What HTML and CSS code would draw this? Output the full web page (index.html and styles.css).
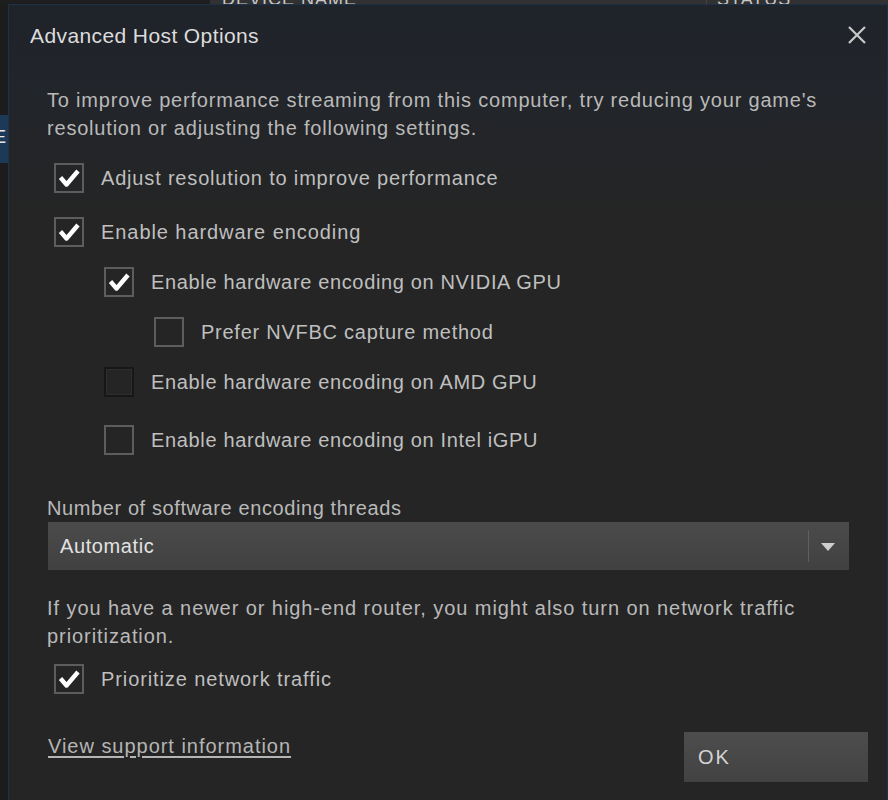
FILE: index.html
```html
<!DOCTYPE html>
<html>
<head>
<meta charset="utf-8">
<link rel="stylesheet" href="styles.css">
</head>
<body>
<div class="app">
  <div class="app-header">
    <div class="app-side-top"></div>
    <div class="col col-name">DEVICE NAME</div>
    <div class="col col-status">STATUS</div>
  </div>
  <div class="app-body">
    <div class="app-side">
      <div class="side-row"></div>
      <div class="side-row selected"><span class="side-glyph">E</span></div>
    </div>
  </div>
</div>

<div class="dialog">
  <div class="dialog-header">
    <div class="dialog-title">Advanced Host Options</div>
    <svg class="close" width="20" height="20" viewBox="0 0 20 20"><path d="M2 2 L18 18 M18 2 L2 18" stroke="#c9c9c9" stroke-width="2.2" fill="none"/></svg>
  </div>
  <div class="dialog-body">
    <p class="para para1">To improve performance streaming from this computer, try reducing your game's resolution or adjusting the following settings.</p>

    <div class="opt r1">
      <span class="box checked"><svg viewBox="0 0 26 26" width="26" height="26"><path d="M4.5 12.5 L10.5 19.5 L22 6" stroke="#fff" stroke-width="4.4" fill="none" stroke-linejoin="round"/></svg></span>
      <span class="label">Adjust resolution to improve performance</span>
    </div>
    <div class="opt r2">
      <span class="box checked"><svg viewBox="0 0 26 26" width="26" height="26"><path d="M4.5 12.5 L10.5 19.5 L22 6" stroke="#fff" stroke-width="4.4" fill="none" stroke-linejoin="round"/></svg></span>
      <span class="label">Enable hardware encoding</span>
    </div>
    <div class="opt r3 indent1">
      <span class="box checked"><svg viewBox="0 0 26 26" width="26" height="26"><path d="M4.5 12.5 L10.5 19.5 L22 6" stroke="#fff" stroke-width="4.4" fill="none" stroke-linejoin="round"/></svg></span>
      <span class="label">Enable hardware encoding on NVIDIA GPU</span>
    </div>
    <div class="opt r4 indent2">
      <span class="box"></span>
      <span class="label">Prefer NVFBC capture method</span>
    </div>
    <div class="opt r5 indent1">
      <span class="box dim"></span>
      <span class="label">Enable hardware encoding on AMD GPU</span>
    </div>
    <div class="opt r6 indent1">
      <span class="box"></span>
      <span class="label">Enable hardware encoding on Intel iGPU</span>
    </div>

    <div class="field-label">Number of software encoding threads</div>
    <div class="select">
      <span class="select-value">Automatic</span>
      <span class="select-sep"></span>
      <span class="select-arrow"></span>
    </div>

    <p class="para para2">If you have a newer or high-end router, you might also turn on network traffic prioritization.</p>

    <div class="opt r7">
      <span class="box checked"><svg viewBox="0 0 26 26" width="26" height="26"><path d="M4.5 12.5 L10.5 19.5 L22 6" stroke="#fff" stroke-width="4.4" fill="none" stroke-linejoin="round"/></svg></span>
      <span class="label">Prioritize network traffic</span>
    </div>

    <div class="footer">
      <a class="link">View support information</a>
      <button class="btn">OK</button>
    </div>
  </div>
</div>
</body>
</html>
```

FILE: styles.css
```css
html, body {
  margin: 0;
  padding: 0;
  height: 100%;
  overflow: hidden;
}
body {
  background: #1d1d1d;
  font-family: "Liberation Sans", Arial, sans-serif;
  position: relative;
}

/* backdrop app */
.app {
  width: 888px;
  height: 800px;
  display: flex;
  flex-direction: column;
}
.app-header {
  display: flex;
  height: 5px;
  overflow: hidden;
  background: #313131;
}
.app-side-top {
  width: 210px;
  background: #1e1e1e;
}
.col {
  font-size: 18px;
  color: #c8c8c8;
  line-height: 14px;
  margin-top: -8px;
  letter-spacing: 1px;
}
.col-name {
  width: 484px;
  padding-left: 12px;
  border-right: 1px solid #444;
}
.col-status {
  padding-left: 10px;
}
.app-body {
  display: flex;
  flex: 1;
}
.app-side {
  width: 9px;
  background: #1c1c1c;
}
.side-row {
  height: 110px;
}
.side-row.selected {
  height: 48px;
  background: #1c3a57;
  overflow: hidden;
}
.side-glyph {
  display: block;
  color: #e8e8e8;
  font-size: 18px;
  margin-left: -6px;
  margin-top: 12px;
}

/* dialog */
.dialog {
  position: absolute;
  left: 8px;
  top: 4px;
  width: 878px;
  height: 820px;
  border: 1px solid #1d3149;
  background: linear-gradient(to bottom, #1f232a 0px, #22252a 90px, #252525 220px, #252525 100%);
  color: #bcbcbc;
}
.dialog-header {
  display: flex;
  justify-content: space-between;
  align-items: center;
  height: 62px;
  padding: 0 20px 0 21px;
}
.dialog-title {
  font-size: 21px;
  letter-spacing: 0.4px;
  color: #dcdcdc;
}
.close {
  margin-top: -2px;
}
.dialog-body {
  padding: 19px 38px 0 38px;
}
.para {
  margin: 0;
  font-size: 20px;
  letter-spacing: 0.6px;
  line-height: 28px;
  color: #b9b9b9;
}
.para1 {
  letter-spacing: 0.8px;
}
.opt {
  display: flex;
  align-items: center;
  height: 30px;
  margin-left: 7px;
}
.opt.indent1 { margin-left: 57px; }
.opt.indent2 { margin-left: 107px; }
.r1 { margin-top: 21px; }
.r2 { margin-top: 24px; }
.r3 { margin-top: 20px; }
.r4 { margin-top: 20px; }
.r5 { margin-top: 20px; }
.r6 { margin-top: 28px; }
.r7 { margin-top: 14px; }
.box {
  box-sizing: border-box;
  width: 30px;
  height: 30px;
  border: 2px solid #5d5d5d;
  display: flex;
  align-items: center;
  justify-content: center;
  flex: none;
}
.box.dim {
  border-color: #171717;
  box-shadow: inset 0 0 0 1px #2e2e2e;
}
.label {
  margin-left: 17px;
  font-size: 20px;
  letter-spacing: 0.65px;
  color: #bfbfbf;
}
.r1 .label { letter-spacing: 0.82px; }
.r2 .label { letter-spacing: 0.93px; }
.r4 .label { letter-spacing: 0.75px; }
.r7 .label { letter-spacing: 0.9px; }
.field-label {
  margin-top: 39px;
  font-size: 20px;
  letter-spacing: 0.6px;
  line-height: 28px;
  color: #b9b9b9;
}
.select {
  display: flex;
  align-items: center;
  height: 48px;
  margin-left: 1px;
  background: linear-gradient(to bottom, #4b4b4b, #414141);
}
.select-value {
  flex: 1;
  padding-left: 12px;
  font-size: 20px;
  letter-spacing: 0.6px;
  color: #e2e2e2;
}
.select-sep {
  width: 1px;
  height: 32px;
  background: #5f5f5f;
}
.select-arrow {
  width: 0;
  height: 0;
  border-left: 7px solid transparent;
  border-right: 7px solid transparent;
  border-top: 8px solid #cfcfcf;
  margin: 2px 14px 0 12px;
}
.para2 {
  margin-top: 24px;
  letter-spacing: 0.93px;
}
.footer {
  display: flex;
  justify-content: space-between;
  align-items: flex-start;
  margin-top: 38px;
}
.link {
  font-size: 20px;
  letter-spacing: 0.97px;
  line-height: 28px;
  color: #b5b5b5;
  text-decoration: underline;
  text-underline-offset: 3px;
  margin-left: 1px;
}
.btn {
  width: 184px;
  height: 50px;
  margin-right: -19px;
  border: none;
  background: linear-gradient(to bottom, #4d4d4d, #424242);
  color: #d4d4d4;
  font-family: "Liberation Sans", Arial, sans-serif;
  font-size: 20px;
  letter-spacing: 2px;
  text-align: left;
  padding: 0 0 0 14px;
}
```
